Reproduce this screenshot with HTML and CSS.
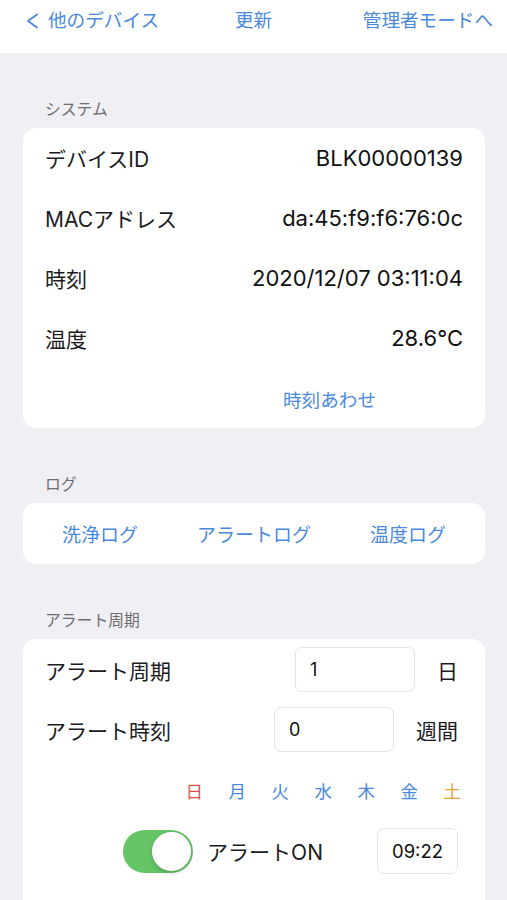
FILE: index.html
```html
<!DOCTYPE html>
<html lang="ja">
<head>
<meta charset="utf-8">
<link rel="stylesheet" href="styles.css">
</head>
<body>
<header class="nav">
  <span class="nav-left"><svg class="chev" width="13" height="16" viewBox="0 0 13 16"><polyline points="11,1.5 2,8 11,14.5" fill="none" stroke="#4a89dc" stroke-width="1.9" stroke-linecap="round" stroke-linejoin="round"/></svg>他のデバイス</span>
  <span class="nav-center">更新</span>
  <span class="nav-right">管理者モードへ</span>
</header>

<main class="page">
  <section class="section">
    <div class="section-title">システム</div>
    <div class="card">
      <div class="row"><span class="label">デバイスID</span><span class="value">BLK00000139</span></div>
      <div class="row"><span class="label">MACアドレス</span><span class="value">da:45:f9:f6:76:0c</span></div>
      <div class="row"><span class="label">時刻</span><span class="value">2020/12/07 03:11:04</span></div>
      <div class="row"><span class="label">温度</span><span class="value">28.6°C</span></div>
      <div class="row row-action"><span class="link">時刻あわせ</span></div>
    </div>
  </section>

  <section class="section">
    <div class="section-title">ログ</div>
    <div class="card card-logs">
      <span class="link log-btn">洗浄ログ</span>
      <span class="link log-btn">アラートログ</span>
      <span class="link log-btn">温度ログ</span>
    </div>
  </section>

  <section class="section">
    <div class="section-title">アラート周期</div>
    <div class="card card-alert">
      <div class="arow">
        <span class="label">アラート周期</span>
        <span class="spacer"></span>
        <span class="input">1</span>
        <span class="unit">日</span>
      </div>
      <div class="arow arow-2">
        <span class="label">アラート時刻</span>
        <span class="spacer"></span>
        <span class="input">0</span>
        <span class="unit">週間</span>
      </div>
      <div class="weekdays">
        <span class="day sun">日</span>
        <span class="day">月</span>
        <span class="day">火</span>
        <span class="day">水</span>
        <span class="day">木</span>
        <span class="day">金</span>
        <span class="day sat">土</span>
      </div>
      <div class="onrow">
        <span class="toggle"><span class="knob"></span></span>
        <span class="on-label">アラートON</span>
        <span class="timebox">09:22</span>
      </div>
    </div>
  </section>
</main>
</body>
</html>
```

FILE: styles.css
```css
* { box-sizing: border-box; }

html, body {
  margin: 0;
  padding: 0;
}

body {
  background: #efeff4;
  font-family: Inter, "Noto Sans CJK JP", sans-serif;
  color: #1c1c1e;
  overflow: hidden;
}

.nav {
  height: 53px;
  background: #ffffff;
  display: grid;
  grid-template-columns: 1fr auto 1fr;
  align-items: start;
  padding: 7px 14px 0 14px;
  font-size: 18.6px;
  line-height: 26px;
  color: #4a89dc;
}

.nav-left {
  justify-self: start;
  padding-left: 12px;
  display: flex;
  align-items: center;
}

.chev {
  margin-right: 9px;
  margin-top: 1px;
}

.nav-center { justify-self: center; }
.nav-right { justify-self: end; }

.page {
  padding: 0 22px 0 23px;
}

.section {
  padding-top: 47px;
}

.section-title {
  font-size: 15.8px;
  line-height: 20px;
  color: #6d6d72;
  padding-left: 22px;
  margin-bottom: 8px;
}

.card {
  background: #ffffff;
  border-radius: 13px;
}

.row {
  height: 60px;
  display: flex;
  align-items: center;
  justify-content: space-between;
  padding: 0 22px;
}

.label {
  font-size: 21px;
  color: #1c1c1e;
}

.value {
  font-size: 22px;
  color: #111111;
}

.link {
  color: #4a89dc;
  font-size: 18.6px;
}

.row-action {
  justify-content: flex-end;
  padding-right: 109px;
}

.card-logs {
  height: 61px;
  display: grid;
  grid-template-columns: 1fr 1fr 1fr;
  align-items: center;
  justify-items: center;
}

.log-btn {
  font-size: 19px;
}

.card-alert {
  padding: 8px 27px 40px 22px;
  display: flex;
  flex-direction: column;
}

.arow {
  display: flex;
  align-items: center;
  height: 45px;
}

.arow-2 {
  margin-top: 15px;
}

.spacer { flex: 1; }

.input {
  width: 120px;
  height: 45px;
  border: 1px solid #e3e3e8;
  border-radius: 7px;
  display: flex;
  align-items: center;
  padding-left: 14px;
  font-size: 18px;
  color: #111111;
}

.arow .unit {
  font-size: 21px;
  margin-left: 22px;
  color: #1c1c1e;
}

.weekdays {
  display: flex;
  justify-content: flex-end;
  gap: 25.5px;
  margin-top: 28px;
  margin-right: -3px;
  font-size: 17.5px;
  line-height: 24px;
}

.day { color: #4a89dc; }
.day.sun { color: #d9534f; }
.day.sat { color: #e9a23b; }

.onrow {
  display: flex;
  align-items: center;
  justify-content: flex-end;
  margin-top: 24px;
}

.toggle {
  width: 70px;
  height: 43px;
  border-radius: 22px;
  background: #65c466;
  position: relative;
  margin-right: 14px;
}

.knob {
  position: absolute;
  top: 2px;
  right: 2px;
  width: 39px;
  height: 39px;
  border-radius: 50%;
  background: #ffffff;
  box-shadow: 0 2px 4px rgba(0, 0, 0, 0.18);
}

.on-label {
  font-size: 21px;
  color: #1c1c1e;
  margin-right: 54px;
}

.timebox {
  width: 81px;
  height: 46px;
  border: 1px solid #e3e3e8;
  border-radius: 7px;
  display: flex;
  align-items: center;
  justify-content: center;
  font-size: 18.5px;
  color: #111111;
}
```
